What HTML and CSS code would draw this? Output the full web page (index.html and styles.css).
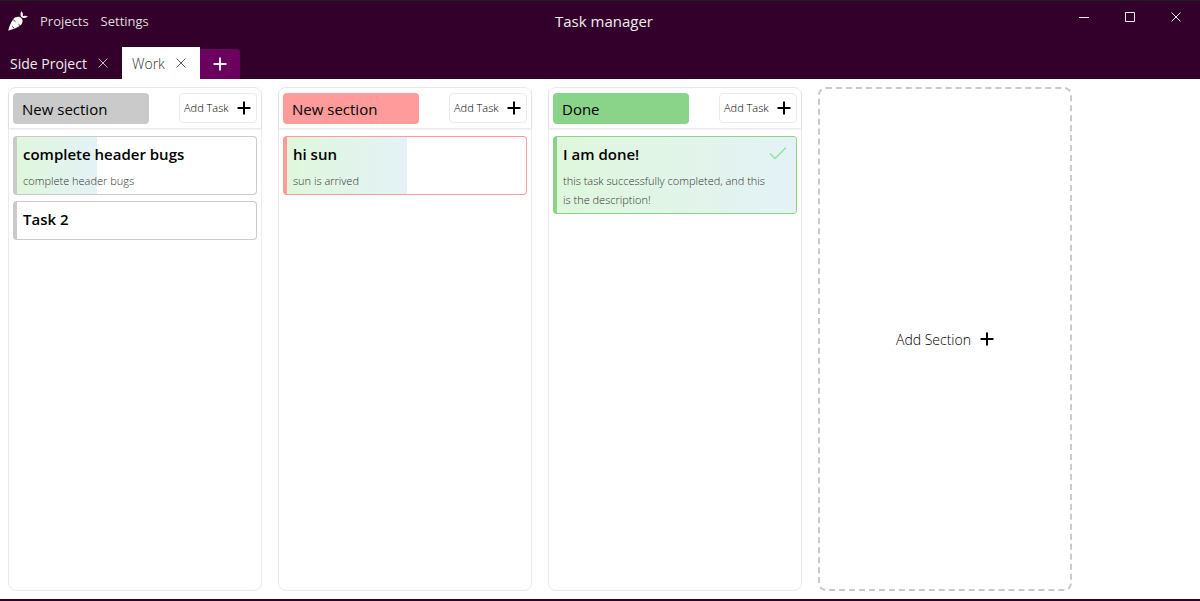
FILE: index.html
```html
<!DOCTYPE html>
<html lang="en">
<head>
<meta charset="utf-8">
<title>Task manager</title>
<meta name="viewport" content="width=device-width, initial-scale=1">
<link rel="stylesheet" href="styles.css">
</head>
<body>
<svg class="defs" aria-hidden="true">
  <symbol id="plus" viewBox="0 0 14 14"><path d="M7 0.5V13.5M0.5 7H13.5" fill="none" stroke="currentColor" stroke-width="2"/></symbol>
  <symbol id="cross" viewBox="0 0 10 10"><path d="M0.5 0.5L9.5 9.5M9.5 0.5L0.5 9.5" fill="none" stroke="currentColor"/></symbol>
</svg>
<header class="header">
  <div class="titlebar">
    <nav class="menu">
      <svg class="logo" viewBox="0 0 20 20" aria-hidden="true">
        <path d="M0.2 19.7C1.2 15.5 3 11 5.2 8.2C7.6 5.2 12 5.1 13.7 7.5C15.5 10 14.4 13.3 11.6 15.1C8.3 17.1 4 19 0.2 19.7Z" fill="#fff"/>
        <path d="M13.6 6.2C12.1 4.2 12.2 2.1 13.3 0.2C14.8 1.4 15.4 3.2 14.7 5.2C16.2 4.4 18.3 4.4 19.8 5.6C18.4 7.2 15.9 7.6 13.6 6.2Z" fill="#fff"/>
        <path d="M5.2 8.7L7.5 10.8M4.2 15.3L6 17.1M10.5 13.2L12 14.6" stroke="#33002b" stroke-width="0.9"/>
      </svg>
      <button class="menu-item" type="button">Projects</button>
      <button class="menu-item" type="button">Settings</button>
    </nav>
    <h1 class="app-title">Task manager</h1>
    <div class="window-controls">
      <button class="window-button" type="button" aria-label="Minimize"><svg class="window-icon" viewBox="0 0 10 10"><path d="M0 5.5H10" stroke="currentColor"/></svg></button>
      <button class="window-button" type="button" aria-label="Maximize"><svg class="window-icon" viewBox="0 0 10 10"><path d="M0.5 0.5H9.5V9.5H0.5Z" fill="none" stroke="currentColor"/></svg></button>
      <button class="window-button" type="button" aria-label="Close"><svg class="window-icon"><use href="#cross"/></svg></button>
    </div>
  </div>
  <div class="tabs">
    <div class="tab"><button class="tab-name" type="button">Side Project</button><button class="tab-close" type="button" aria-label="Close Side Project"><svg class="close-icon"><use href="#cross"/></svg></button></div>
    <div class="tab tab-active"><button class="tab-name" type="button">Work</button><button class="tab-close" type="button" aria-label="Close Work"><svg class="close-icon"><use href="#cross"/></svg></button></div>
    <button class="tab-add" type="button" aria-label="Add tab"><svg class="plus-icon"><use href="#plus"/></svg></button>
  </div>
</header>
<main class="board">
  <section class="section section-gray">
    <div class="section-head">
      <input class="section-name" type="text" value="New section" aria-label="Section name">
      <button class="add-task" type="button">Add Task<svg class="plus-icon"><use href="#plus"/></svg></button>
    </div>
    <div class="tasks">
      <article class="task">
        <div class="progress" style="width: 33.4%"></div>
        <h2 class="task-title">complete header bugs</h2>
        <p class="task-text">complete header bugs</p>
      </article>
      <article class="task">
        <h2 class="task-title">Task 2</h2>
      </article>
    </div>
  </section>
  <section class="section section-red">
    <div class="section-head">
      <input class="section-name" type="text" value="New section" aria-label="Section name">
      <button class="add-task" type="button">Add Task<svg class="plus-icon"><use href="#plus"/></svg></button>
    </div>
    <div class="tasks">
      <article class="task">
        <div class="progress" style="width: 50%"></div>
        <h2 class="task-title">hi sun</h2>
        <p class="task-text">sun is arrived</p>
      </article>
    </div>
  </section>
  <section class="section section-green">
    <div class="section-head">
      <input class="section-name" type="text" value="Done" aria-label="Section name">
      <button class="add-task" type="button">Add Task<svg class="plus-icon"><use href="#plus"/></svg></button>
    </div>
    <div class="tasks">
      <article class="task">
        <div class="progress" style="width: 100%"></div>
        <h2 class="task-title">I am done!</h2>
        <p class="task-text">this task successfully completed, and this is the description!</p>
        <svg class="check" viewBox="0 0 18 14" aria-hidden="true"><path d="M1 7.5L6 12.5L17 1.5" fill="none" stroke="#8ee2a0" stroke-width="1.4"/></svg>
      </article>
    </div>
  </section>
  <button class="add-section" type="button">Add Section<svg class="plus-icon"><use href="#plus"/></svg></button>
</main>
</body>
</html>
```
FILE: styles.css
```css
* {
  box-sizing: border-box;
}

body {
  display: flex;
  flex-direction: column;
  min-height: 100vh;
  margin: 0;
  border-top: 1px solid #1f1f1f;
  border-bottom: 2px solid #33002b;
  background: #fff;
  color: #000;
  font-family: "Segoe UI", "Open Sans", sans-serif;
  font-size: 15px;
}

button {
  padding: 0;
  border: 0;
  background: none;
  color: inherit;
  font: inherit;
  cursor: pointer;
}

h1,
h2,
p {
  margin: 0;
}

svg {
  flex: none;
}

.defs {
  position: absolute;
  width: 0;
  height: 0;
}

.plus-icon {
  width: 14px;
  height: 14px;
}

/* Header */
.header {
  background: #33002b;
  color: #eee;
}

.titlebar {
  display: grid;
  grid-template-columns: 1fr auto 1fr;
  height: 46px;
}

.menu {
  display: flex;
  align-items: center;
  gap: 12px;
  padding: 0 8px 6px;
}

.logo {
  width: 20px;
  height: 20px;
}

.menu-item {
  color: #ddd;
  font-size: 13px;
}

.app-title {
  padding-left: 8px;
  font-size: 15px;
  font-weight: 400;
  line-height: 40px;
}

.window-controls {
  display: flex;
  justify-content: flex-end;
}

.window-button {
  display: grid;
  place-items: center;
  width: 46px;
  height: 32px;
}

.window-icon {
  width: 10px;
  height: 10px;
}

.window-button:last-child {
  margin-right: 1px;
}

.tabs {
  display: flex;
  align-items: flex-end;
}

.tab {
  display: flex;
  align-items: center;
  gap: 11px;
  height: 32px;
  padding: 0 14px 0 10px;
  font-size: 14px;
}

.tab-active {
  background: #fff;
  color: #333;
  font-weight: 300;
}

.tab-close {
  display: grid;
  place-items: center;
}

.close-icon {
  width: 10px;
  height: 10px;
  opacity: 0.8;
}

.tab-add {
  display: grid;
  place-items: center;
  width: 40px;
  height: 30px;
  border-top-right-radius: 3px;
  background: #6b005e;
}

/* Board */
.board {
  display: flex;
  flex: 1;
  gap: 16px;
  padding: 8px;
}

.section {
  flex: 0 0 254px;
  border: 1px solid #ebebeb;
  border-radius: 8px;
}

.section-gray {
  --accent: #cacaca;
}

.section-red {
  --accent: #ff9b9b;
}

.section-green {
  --accent: #8ad48a;
}

.section-head {
  display: flex;
  align-items: flex-start;
  justify-content: space-between;
  padding: 5px 4px 4px;
  box-shadow: 0 1px 2px rgba(0, 0, 0, 0.12);
}

.section-name {
  width: 136px;
  height: 31px;
  padding: 0 9px;
  border: 0;
  border-radius: 4px;
  background: var(--accent);
  color: #000;
  font: inherit;
}

.add-task {
  display: flex;
  align-items: center;
  justify-content: space-between;
  width: 78px;
  height: 30px;
  padding: 0 5px 0 4px;
  border: 1px solid #ebebeb;
  border-radius: 4px;
  font-size: 11px;
  font-weight: 300;
  line-height: 14px;
}

.tasks {
  display: flex;
  flex-direction: column;
  gap: 6px;
  padding: 8px 4px;
}

.task {
  position: relative;
  padding: 7px 6px 9px;
  overflow: hidden;
  border: 1px solid var(--accent);
  border-left-width: 4px;
  border-radius: 4px;
}

.progress {
  position: absolute;
  inset: 0 auto 0 0;
  background: linear-gradient(to right, #dff7dc, #e4f2f6);
}

.task-title,
.task-text {
  position: relative;
}

.task-title {
  font-size: 15px;
  font-weight: 600;
  line-height: 21px;
}

.task-text {
  margin: 6px 20px -5px 0;
  color: #333;
  font-size: 11px;
  font-weight: 300;
  line-height: 19px;
}

.check {
  position: absolute;
  top: 9px;
  right: 9px;
  width: 18px;
  height: 14px;
}

.add-section {
  display: flex;
  flex: 0 0 254px;
  align-items: center;
  justify-content: center;
  gap: 9px;
  border: 2px dashed #cacaca;
  border-radius: 8px;
  font-size: 14px;
  font-weight: 300;
}
```
